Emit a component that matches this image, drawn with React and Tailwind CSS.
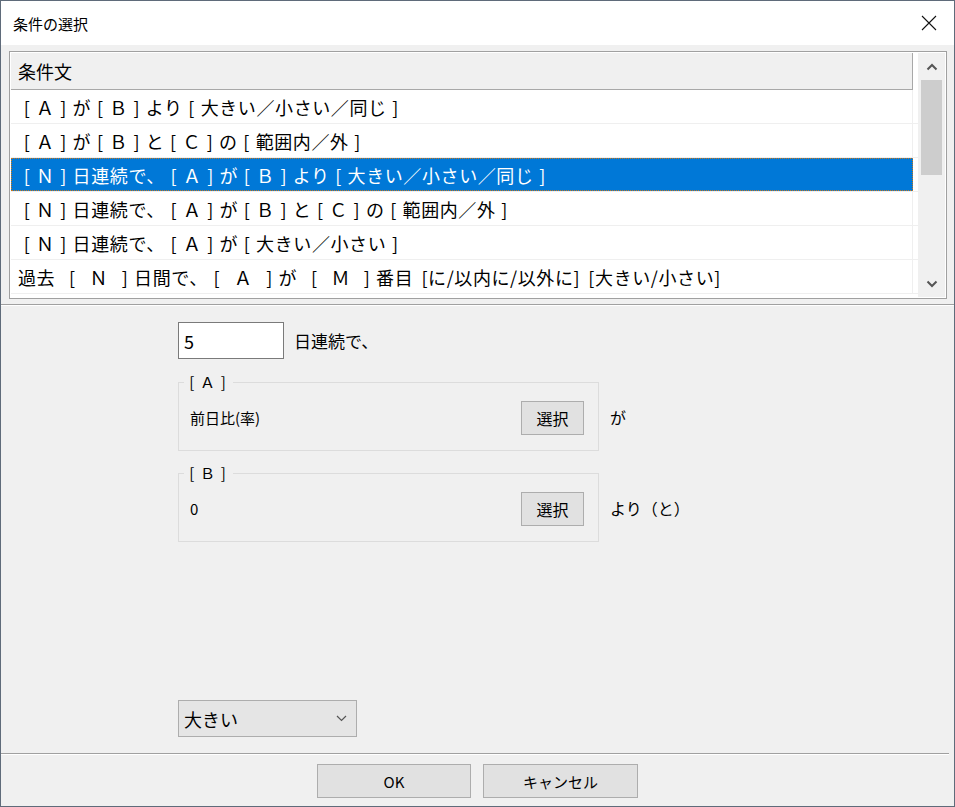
import React from "react";

const rows = [
  "［Ａ］が［Ｂ］より［大きい／小さい／同じ］",
  "［Ａ］が［Ｂ］と［Ｃ］の［範囲内／外］",
  "［Ｎ］日連続で、［Ａ］が［Ｂ］より［大きい／小さい／同じ］",
  "［Ｎ］日連続で、［Ａ］が［Ｂ］と［Ｃ］の［範囲内／外］",
  "［Ｎ］日連続で、［Ａ］が［大きい／小さい］",
  "過去 ［ Ｎ ］日間で、［ Ａ ］が ［ Ｍ ］番目 [に/以内に/以外に] [大きい/小さい]",
];

function T({ s }) {
  const out = [];
  let buf = "";
  s.split("").forEach((c, i) => {
    if (c === "［" || c === "］") {
      if (buf) out.push(buf);
      buf = "";
      out.push(
        <span key={i} className="inline-block w-[1em] text-center">
          {c === "［" ? "[" : "]"}
        </span>
      );
    } else if (c === " ") {
      if (buf) out.push(buf);
      buf = "";
      out.push(<span key={i} className="inline-block w-[0.45em]" />);
    } else {
      buf += c;
    }
  });
  if (buf) out.push(buf);
  return <>{out}</>;
}

function Group({ label, value, after }) {
  return (
    <div className="flex items-center">
      <div className="relative w-[421px] h-[69px] border border-[#dcdcdc] flex items-center justify-between pl-[11px] pr-[14px]">
        <span className="absolute -top-[11px] left-[5px] px-[1px] bg-[#f0f0f0] text-[15px] tracking-[1.5px] leading-[20px]">
          <T s={`［${label}］`} />
        </span>
        <span className="text-[15px] leading-none pt-[1px]">{value}</span>
        <button className="w-[63px] h-[34px] mt-[2px] bg-[#e1e1e1] border border-[#adadad] text-[16px] leading-none">選択</button>
      </div>
      <span className="ml-[11px] text-[16px] leading-none">{after}</span>
    </div>
  );
}

export default function App() {
  return (
    <div className="w-[955px] h-[807px] bg-[#f0f0f0] border border-[#5f6b7a] flex flex-col overflow-hidden text-black [text-spacing-trim:space-all] font-['Noto_Sans_CJK_JP','Noto_Sans',sans-serif]">
      {/* title bar */}
      <div className="h-[44px] bg-white flex items-center justify-between pl-[12px] pr-[17px] shrink-0">
        <span className="text-[15px] leading-none">条件の選択</span>
        <svg width="16" height="16" viewBox="0 0 16 16" className="block">
          <path d="M1 1 L15 15 M15 1 L1 15" stroke="#111" strokeWidth="1.1" fill="none" />
        </svg>
      </div>

      {/* list */}
      <div className="pt-[6px] px-[8px] shrink-0">
        <div className="w-[938px] h-[248px] border border-[#a0a0a0] p-[1px] bg-white flex">
          <div className="flex-1 flex flex-col">
            <div className="h-[37px] w-[902px] bg-[#f0f0f0] border-r border-b border-[#a8a8a8] flex items-center pl-[7px] text-[18px] leading-none">
              条件文
            </div>
            {rows.map((r, i) => (
              <div key={i} className="h-[34px] border-b border-[#efefef] flex shrink-0">
                {i === 2 ? (
                  <div className="w-[902px] bg-[#0078d7] text-white border border-dotted border-[#c8781e] flex items-center pl-[6px] text-[18px] tracking-[0.6px] leading-none whitespace-nowrap">
                    <T s={r} />
                  </div>
                ) : (
                  <div className="w-[902px] border-r border-[#efefef] flex items-center pl-[7px] text-[18px] tracking-[0.6px] leading-none whitespace-nowrap">
                    <T s={r} />
                  </div>
                )}
              </div>
            ))}
          </div>
          <div className="w-[27px] bg-[#f0f0f0] flex flex-col items-center">
            <div className="h-[27px] flex items-center justify-center">
              <svg width="12" height="8" viewBox="0 0 12 8"><path d="M1.5 6.5 L6 2 L10.5 6.5" stroke="#555" strokeWidth="2" fill="none" /></svg>
            </div>
            <div className="w-[21px] h-[95px] bg-[#cdcdcd]" />
            <div className="flex-1" />
            <div className="h-[27px] flex items-center justify-center">
              <svg width="12" height="8" viewBox="0 0 12 8"><path d="M1.5 1.5 L6 6 L10.5 1.5" stroke="#555" strokeWidth="2" fill="none" /></svg>
            </div>
          </div>
        </div>
      </div>

      {/* separator */}
      <div className="mt-[5px] border-t border-b border-t-[#a0a0a0] border-b-white shrink-0" />

      {/* content */}
      <div className="pl-[177px] flex flex-col shrink-0">
        <div className="mt-[16px] flex items-center">
          <div className="w-[106px] h-[37px] bg-white border border-[#7a7a7a] flex items-center pl-[5px] text-[18px] leading-none">5</div>
          <span className="ml-[10px] text-[17px] leading-none">日連続で、</span>
        </div>
        <div className="mt-[23px]">
          <Group label="Ａ" value="前日比(率)" after="が" />
        </div>
        <div className="mt-[22px]">
          <Group label="Ｂ" value="0" after="より（と）" />
        </div>
        <div className="mt-[158px] w-[179px] h-[37px] bg-[#e5e5e5] border border-[#adadad] flex items-center justify-between pl-[5px] pr-[9px]">
          <span className="text-[18px] leading-none">大きい</span>
          <svg width="11" height="7" viewBox="0 0 11 7"><path d="M1 1 L5.5 5.5 L10 1" stroke="#555" strokeWidth="1.2" fill="none" /></svg>
        </div>
      </div>

      <div className="mt-[16px] border-t border-b border-t-[#a0a0a0] border-b-white mr-[5px] shrink-0" />

      <div className="mt-[9px] flex justify-center gap-[12px] shrink-0">
        <button className="w-[154px] h-[34px] bg-[#e1e1e1] border border-[#adadad] text-[15px] leading-none">OK</button>
        <button className="w-[155px] h-[34px] bg-[#e1e1e1] border border-[#adadad] text-[15px] leading-none">キャンセル</button>
      </div>
    </div>
  );
}
